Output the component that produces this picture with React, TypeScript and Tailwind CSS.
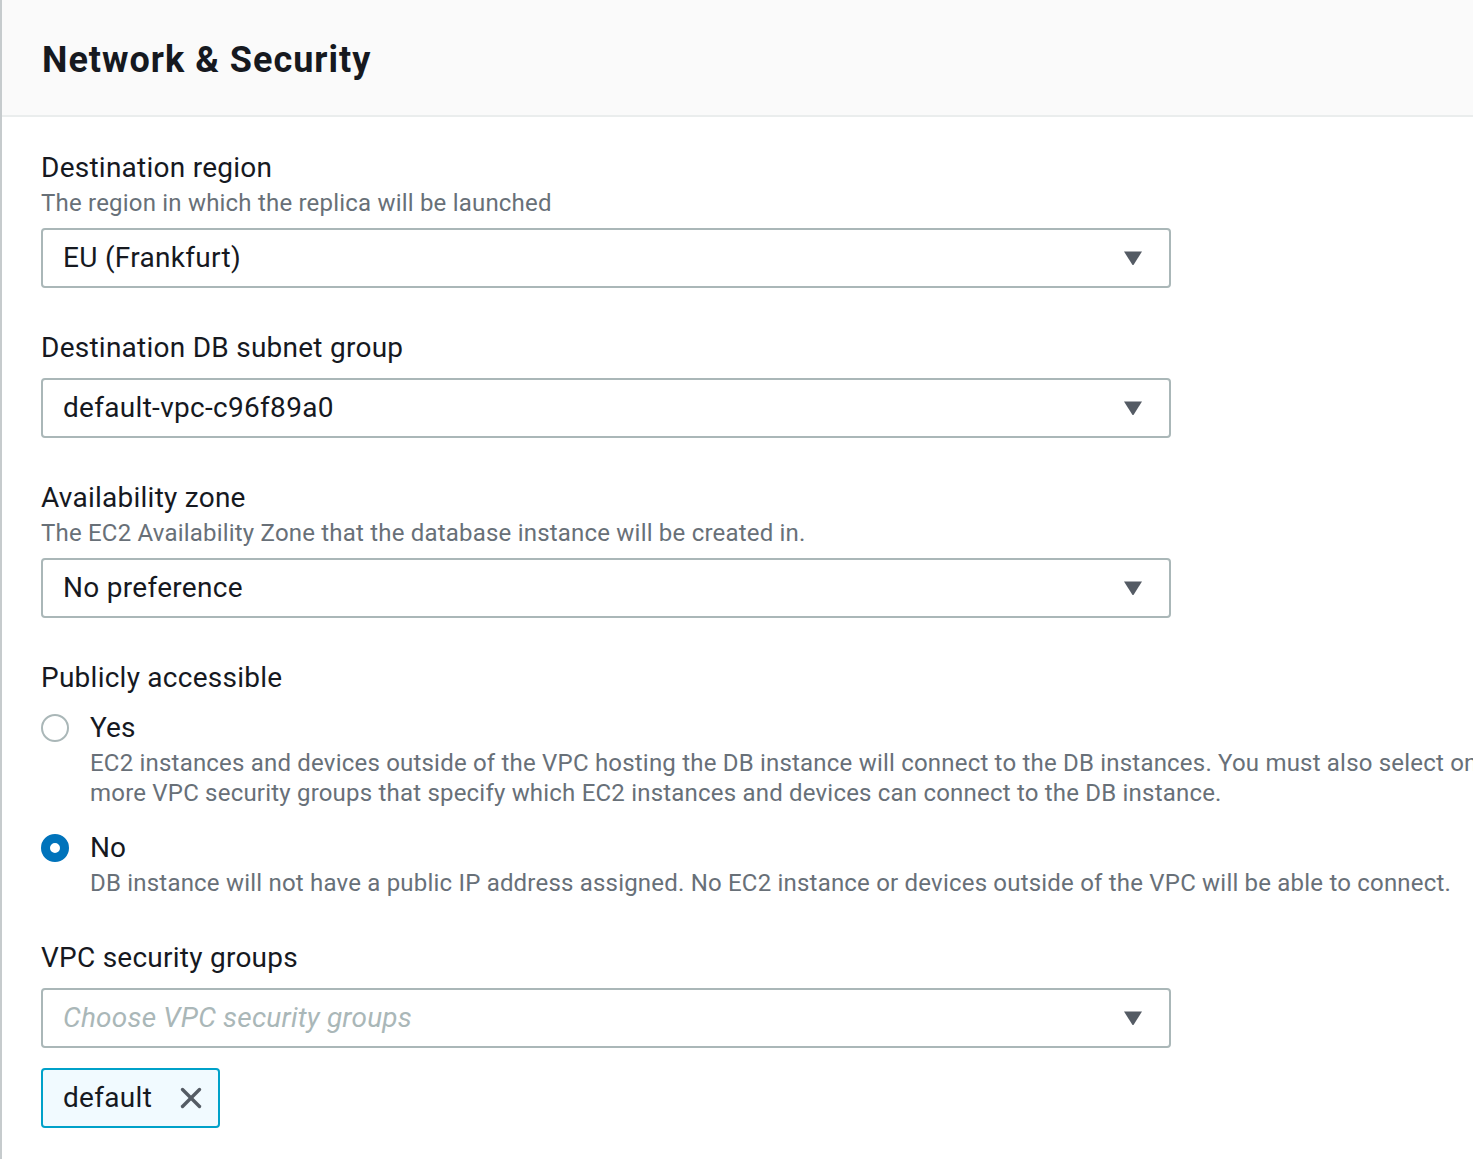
import { X } from "lucide-react"

const font = { fontFamily: "Roboto, 'Noto Sans', sans-serif" }

function Caret() {
  return (
    <svg width="20" height="16" viewBox="0 0 20 16" className="shrink-0">
      <path d="M1 1.5 L19 1.5 L10.8 14.6 Q10 15.6 9.2 14.6 Z" fill="#545b64" />
    </svg>
  )
}

function Select({ value, placeholder }: { value?: string; placeholder?: string }) {
  return (
    <div className="mt-[10px] flex h-[60px] w-[1130px] items-center justify-between rounded-[4px] border-2 border-[#aab7b8] bg-white pr-[26px] pl-[20px]">
      {value ? (
        <span className="text-[28px] tracking-[0.3px] text-[#16191f]">{value}</span>
      ) : (
        <span className="text-[28px] tracking-[0.2px] text-[#aab7b8] italic">{placeholder}</span>
      )}
      <Caret />
    </div>
  )
}

function FieldLabel({ label, desc }: { label: string; desc?: string }) {
  return (
    <div>
      <div className="text-[28px] leading-[40px] tracking-[0.25px] text-[#16191f]">{label}</div>
      {desc && (
        <div className="text-[24px] leading-[30px] tracking-[0.2px] text-[#687078]">{desc}</div>
      )}
    </div>
  )
}

function Radio({ checked, label, desc }: { checked?: boolean; label: string; desc: string }) {
  return (
    <div className="flex gap-[21px]">
      <div className="flex h-[40px] items-center">
        {checked ? (
          <div className="h-[28px] w-[28px] rounded-full border-[9px] border-[#0073bb] bg-white" />
        ) : (
          <div className="h-[28px] w-[28px] rounded-full border-2 border-[#aab7b8] bg-white" />
        )}
      </div>
      <div>
        <div className="text-[28px] leading-[40px] tracking-[0.1px] text-[#16191f]">{label}</div>
        <div className="text-[24px] leading-[30px] tracking-[0.2px] text-[#687078]">{desc}</div>
      </div>
    </div>
  )
}

export default function App() {
  return (
    <div className="h-[1159px] w-[1473px] overflow-hidden bg-white" style={font}>
      <div className="h-full w-[1560px] border-l-2 border-[#c6cbcd]">
        <header className="flex h-[117px] items-center border-b-2 border-[#eaeded] bg-[#fafafa] pt-[4px] pl-[40px]">
          <h2 className="text-[36px] font-bold tracking-[1px] text-[#16191f]">Network &amp; Security</h2>
        </header>

        <div className="flex flex-col gap-[40px] pt-[31px] pl-[39px]">
          <div>
            <FieldLabel label="Destination region" desc="The region in which the replica will be launched" />
            <Select value="EU (Frankfurt)" />
          </div>

          <div>
            <FieldLabel label="Destination DB subnet group" />
            <Select value="default-vpc-c96f89a0" />
          </div>

          <div>
            <FieldLabel
              label="Availability zone"
              desc="The EC2 Availability Zone that the database instance will be created in."
            />
            <Select value="No preference" />
          </div>

          <div>
            <FieldLabel label="Publicly accessible" />
            <div className="mt-[10px] flex flex-col gap-[20px]">
              <Radio
                label="Yes"
                desc="EC2 instances and devices outside of the VPC hosting the DB instance will connect to the DB instances. You must also select one or more VPC security groups that specify which EC2 instances and devices can connect to the DB instance."
              />
              <Radio
                checked
                label="No"
                desc="DB instance will not have a public IP address assigned. No EC2 instance or devices outside of the VPC will be able to connect."
              />
            </div>
          </div>

          <div>
            <FieldLabel label="VPC security groups" />
            <Select placeholder="Choose VPC security groups" />
            <div className="mt-[20px] flex h-[60px] w-[179px] items-center gap-[22px] rounded-[4px] border-2 border-[#00a1c9] bg-[#f1faff] pl-[20px]">
              <span className="text-[28px] tracking-[0.3px] text-[#16191f]">default</span>
              <X className="h-[34px] w-[34px] text-[#545b64]" strokeWidth={2.4} />
            </div>
          </div>
        </div>
      </div>
    </div>
  )
}
